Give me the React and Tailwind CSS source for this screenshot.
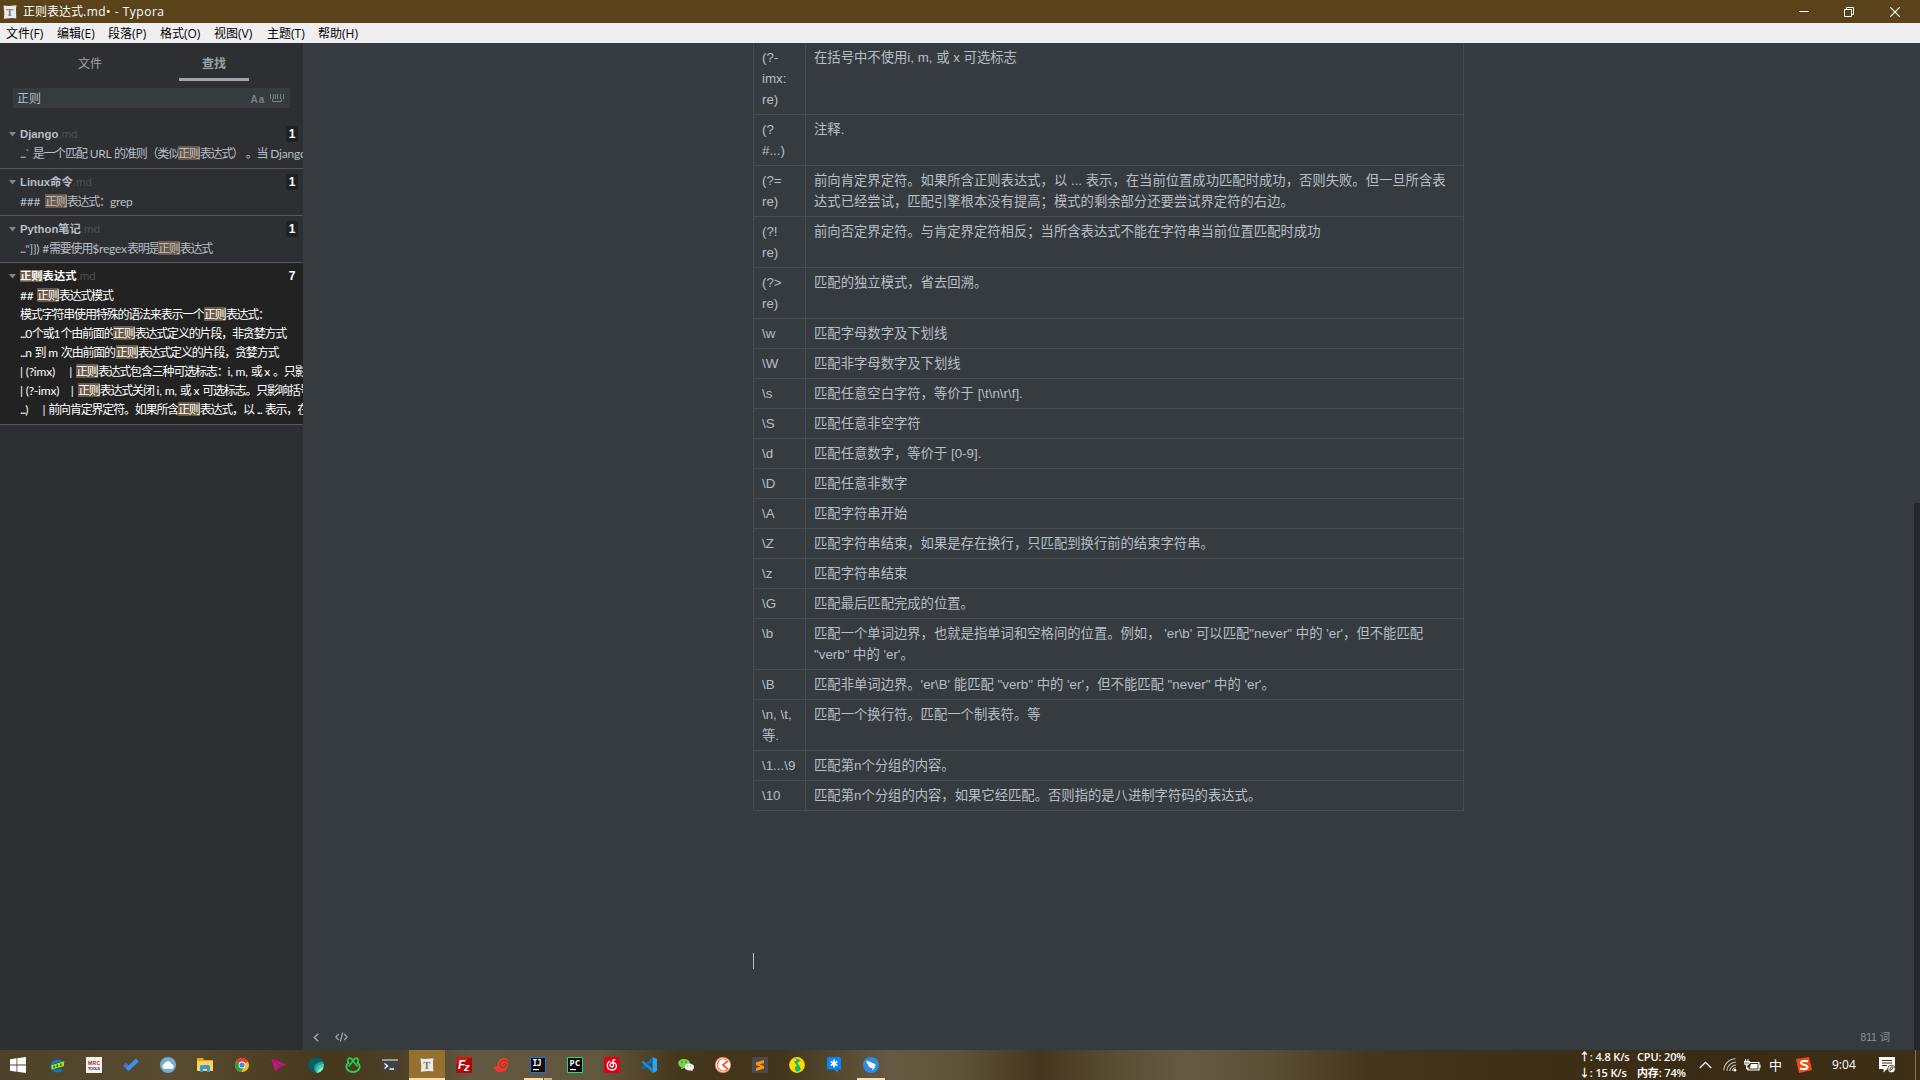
import React from 'react';

const ROWS = [
  [['(?-', 'imx:', 're)'], ['在括号中不使用i, m, 或 x 可选标志']],
  [['(?', '#...)'], ['注释.']],
  [['(?=', 're)'], ['前向肯定界定符。如果所含正则表达式，以 ... 表示，在当前位置成功匹配时成功，否则失败。但一旦所含表', '达式已经尝试，匹配引擎根本没有提高；模式的剩余部分还要尝试界定符的右边。']],
  [['(?!', 're)'], ['前向否定界定符。与肯定界定符相反；当所含表达式不能在字符串当前位置匹配时成功']],
  [['(?>', 're)'], ['匹配的独立模式，省去回溯。']],
  [['\\w'], ['匹配字母数字及下划线']],
  [['\\W'], ['匹配非字母数字及下划线']],
  [['\\s'], ['匹配任意空白字符，等价于 [\\t\\n\\r\\f].']],
  [['\\S'], ['匹配任意非空字符']],
  [['\\d'], ['匹配任意数字，等价于 [0-9].']],
  [['\\D'], ['匹配任意非数字']],
  [['\\A'], ['匹配字符串开始']],
  [['\\Z'], ['匹配字符串结束，如果是存在换行，只匹配到换行前的结束字符串。']],
  [['\\z'], ['匹配字符串结束']],
  [['\\G'], ['匹配最后匹配完成的位置。']],
  [['\\b'], ["匹配一个单词边界，也就是指单词和空格间的位置。例如， 'er\\b' 可以匹配\"never\" 中的 'er'，但不能匹配", "\"verb\" 中的 'er'。"]],
  [['\\B'], ["匹配非单词边界。'er\\B' 能匹配 \"verb\" 中的 'er'，但不能匹配 \"never\" 中的 'er'。"]],
  [['\\n, \\t,', '等.'], ['匹配一个换行符。匹配一个制表符。等']],
  [['\\1...\\9'], ['匹配第n个分组的内容。']],
  [['\\10'], ['匹配第n个分组的内容，如果它经匹配。否则指的是八进制字符码的表达式。']],
];

const MENU = [
  ['文件(F)', 'w-[51px]'],
  ['编辑(E)', 'w-[51px]'],
  ['段落(P)', 'w-[52px]'],
  ['格式(O)', 'w-[54px]'],
  ['视图(V)', 'w-[53px]'],
  ['主题(T)', 'w-[51px]'],
  ['帮助(H)', 'w-[51px]'],
];

function Mark({ children }) {
  return <span className="bg-[#6b5a45]">{children}</span>;
}

function Lines({ lines }) {
  return lines.map((l) => (
    <div key={l} className="whitespace-pre">{l}</div>
  ));
}

// Latin runs keep nearly natural spacing, dots and CJK runs are set tight.
function Mixed({ text }) {
  return text.split(/(\.{3}|[\x20-\x2d\x2f-\x7e]+)/).filter(Boolean).map((run, i) => (
    <span key={i} className={/^\.{3}/.test(run) ? 'tracking-[-1.1px]' : /^[\x20-\x7e]/.test(run) ? 'tracking-[-0.2px]' : 'tracking-[-1.18px]'}>{run}</span>
  ));
}

function Snippet({ before, w, after }) {
  return (
    <div className="flex h-[19px]">
      <span className={'shrink-0 ' + w}><Mixed text={before} /></span>
      <span className="mt-[2px] h-[14px] shrink-0 bg-[#6b5a45] leading-[15px] tracking-[-1.18px]">正则</span>
      <span className="shrink-0"><Mixed text={after} /></span>
    </div>
  );
}

function Result({ name, count, active, first, children }) {
  return (
    <section className={active ? 'border-b border-[#55575a] bg-[#222222] pt-[4px] pb-[5px] text-white' : first ? 'border-b border-[#55575a] pt-[4px] pb-[5px] text-[#b8bfc6]' : 'border-b border-[#55575a] pt-[4px] pb-[4px] text-[#b8bfc6]'}>
      <div className="flex h-[19px] items-center pr-[5px] pl-[9px]">
        <svg className="mr-[4px] h-[5px] w-[7px]" viewBox="0 0 7 5"><path d="M0 0h7L3.5 4.5z" fill="#80858a" /></svg>
        <span className="text-[11.3px] font-bold whitespace-pre">{name}</span>
        <span className="text-[11.5px] text-[#4c4f53]">.md</span>
        <span className={active ? 'mb-[2px] ml-auto flex h-[16px] w-[12px] items-center justify-center text-[12px] font-bold' : 'mb-[2px] ml-auto flex h-[16px] w-[12px] items-center justify-center rounded-[2px] bg-[#202122] text-[12px] font-bold text-white'}>{count}</span>
      </div>
      <div className="overflow-hidden pl-[20px] font-[Lato,'Noto_Sans_CJK_SC',sans-serif] text-[12px] leading-[19px] whitespace-pre">{children}</div>
    </section>
  );
}

function Ico({ children }) {
  return <svg className="h-[16px] w-[16px]" viewBox="0 0 16 16">{children}</svg>;
}

const ICONS = [
  <Ico key="ie">
    <path d="M3 9C3 3 13 2 13 7.500" fill="none" stroke="#0a78d0" strokeWidth="3" />
    <path d="M3 8c0 6.500 6 7 10 4.500" fill="none" stroke="#0a78d0" strokeWidth="3" />
    <path d="M2.300 8.300 15.300 4.300 14.800 9.300 2.500 12.600z" fill="#a4e80c" />
    <path d="M5 8.500v2.500M8.300 7.500V10M11.800 6.500V9" stroke="#27400a" strokeWidth="1.200" />
  </Ico>,
  <Ico key="mrc">
    <path d="M0 0h16v16H0z" fill="#f3f3f3" />
    <text x="8" y="8" fontSize="5" fontWeight="bold" textAnchor="middle" textLength="12" fill="#b52020">MRC</text>
    <text x="8" y="12.500" fontSize="4" fontWeight="bold" textAnchor="middle" textLength="12" fill="#333">TOOLS</text>
  </Ico>,
  <Ico key="todo">
    <path d="M0 8.500 2.800 5.700l5 5-2.900 2.900z" fill="#4a6fe0" />
    <path d="M4.900 13.600 2.900 11 13 1.600l2.800 2.900-9.500 9.100z" fill="#3f8cf7" />
  </Ico>,
  <Ico key="cloud">
    <circle cx="8" cy="8" r="8" fill="#74afd3" />
    <path d="M4.800 12a2.600 2.600 0 0 1-.6-5 3.800 3.800 0 0 1 7.200-.2A2.700 2.700 0 0 1 11.800 12z" fill="#fff" />
  </Ico>,
  <Ico key="folder">
    <path d="M0 1h6l1 2h9v11H0z" fill="#e8a516" />
    <path d="M0 4h16v10H0z" fill="#ffd65c" />
    <path d="M3 14V9l1.500-1h7L13 9v6h-3v-3H6v3H3z" fill="#3b9ad8" />
  </Ico>,
  <Ico key="chrome">
    <circle cx="8" cy="8" r="7" fill="#fbc116" />
    <path d="M8 8 2 4.400a7 7 0 0 1 12.100.1z" fill="#e33b2e" />
    <path d="M1.900 4.500A7 7 0 0 0 7.300 15l3-5.500L8 8z" fill="#2b9f48" />
    <circle cx="8" cy="8" r="3.400" fill="#fff" />
    <circle cx="8" cy="8" r="2.600" fill="#4286f4" />
  </Ico>,
  <Ico key="plane">
    <path d="M0 1 16 8l-6.500 1.400L4 14z" fill="#c3187e" />
    <path d="m7 10 1.300 4.500L10 12z" fill="#8b1160" />
    <path d="m0 1 9.500 8.400" stroke="#8b1160" strokeWidth=".7" />
  </Ico>,
  <Ico key="teal">
    <circle cx="8" cy="8" r="7.900" fill="#0d5c60" />
    <path d="M15 4.500A8 8 0 0 1 8.500 15.900C3.500 11 7 4.500 15 4.500z" fill="#1aa595" />
    <path d="M15.800 7A8 8 0 0 1 9 15.900C6.500 11 9.500 7 15.800 7z" fill="#3fcfae" />
    <path d="M15.600 10.500A8 8 0 0 1 10 15.700c-.5-2.700 2-5.200 5.600-5.200z" fill="#8ff0cd" />
  </Ico>,
  <Ico key="clover">
    <g fill="none" stroke="#28cf4e" strokeWidth="1.800">
      <path d="M8 4.500C7.500 2 5.500.6 4 1.300 2.300 2.200 2.500 5 4 6.500M8 4.500c.5-2.500 2.500-3.900 4-3.200 1.700.9 1.500 3.700 0 5.200" />
      <path d="M4 5.500C1.500 7 .8 9.500 2 12c2.300 4 9.700 4 12 0 1.200-2.500.5-5-2-6.500" />
      <path d="M8 4 3.500 9.500M8 4l4.500 5.500" strokeWidth="1.500" />
    </g>
  </Ico>,
  <Ico key="term">
    <path d="M0 2h16v12H0z" fill="#3f4347" />
    <path d="M0 2h16v2H0z" fill="#92989c" />
    <path d="m2.500 6.500 3 2.500-3 2.500M7.500 12H12" stroke="#fff" strokeWidth="1.400" fill="none" />
  </Ico>,
  <TyporaMark key="ty" />,
  <Ico key="fz">
    <path d="M0 0h16v16H0z" fill="#b50707" />
    <path d="M0 0h16L0 8z" fill="#cc1a14" />
    <text x="2" y="11.500" fontSize="12" fontStyle="italic" fontWeight="bold" fill="#fff">F</text>
    <text x="8" y="14" fontSize="11" fontStyle="italic" fontWeight="bold" fill="#fff">z</text>
  </Ico>,
  <Ico key="swirl">
    <path d="M0 9.500c2 .8 3.500.3 5-1.500C4.500 3.500 7.500 1 11 1c2.500 0 4.500 1.200 5 3l-1.800.4C16 9 13.500 15 8 15c-4 0-7-2-8-5.500z" fill="#ec3b32" />
    <path d="M14.500 4.500C11 2.500 7 4 7 7.500c0 2.500 2.500 4 4.500 3s2-4-.2-4c-1.300 0-1.800 1.500-1 2.200" fill="none" stroke="#67301f" strokeWidth=".7" />
  </Ico>,
  <Ico key="ij">
    <path d="M.5.5h15v15H.5z" fill="#0b0b0d" stroke="#1575e8" />
    <text x="2.500" y="9" fontSize="8" textLength="9" fontWeight="bold" fill="#fff" fontFamily="DejaVu Sans Mono">IJ</text>
    <path d="M3 12h6v1.200H3z" fill="#fff" />
  </Ico>,
  <Ico key="pc">
    <path d="M.5.5h15v15H.5z" fill="#0b0b0d" stroke="#22d88f" />
    <text x="2.500" y="9" fontSize="8" textLength="10.500" fontWeight="bold" fill="#fff" fontFamily="Open Sans">PC</text>
    <path d="M3 12h6v1.200H3z" fill="#fff" />
  </Ico>,
  <Ico key="netease">
    <rect width="16" height="16" rx="2.500" fill="#dd001b" />
    <path d="M6.200 4C2 6 2.500 13 8 13c5 0 6-6.500 1.500-7.300C5.500 5 5 10 7.800 10c2.700 0 1.500-3 1-5.500C8.500 2.700 10 2.200 11.300 3.200" fill="none" stroke="#fff" strokeWidth="1.300" />
  </Ico>,
  <Ico key="code">
    <path d="M11.500 0 16 2v12l-4.500 2z" fill="#2aa5ef" />
    <path d="M11.500 0v5L2 12.300.3 11l11.200-11z" fill="#0b6fb8" />
    <path d="M11.500 16v-5L2 3.700.3 5z" fill="#168bd6" />
  </Ico>,
  <Ico key="wechat">
    <path d="M6 2c8 0 8 9 0 9l-3 1.300.3-2C-2 7.500 0 2 6 2z" fill="#7bd34b" />
    <path d="M11 6.500c6 0 6 5 3.500 6.500l.2 1.300-1.700-.8C5 14.500 5 6.500 11 6.500z" fill="#f1f1f1" />
    <circle cx="4" cy="5" r=".8" fill="#315d20" /><circle cx="8" cy="5" r=".8" fill="#315d20" />
    <circle cx="9.500" cy="9" r=".6" fill="#888" /><circle cx="12.700" cy="9" r=".6" fill="#888" />
  </Ico>,
  <Ico key="k">
    <circle cx="8" cy="8" r="8" fill="#f58a64" />
    <circle cx="8" cy="8" r="7.200" fill="#fff" />
    <path d="M11.500 2.800A6 6 0 1 0 12 12.700" fill="none" stroke="#f0683c" strokeWidth="1.200" />
    <path d="M13 3.800 8 8l5 4.200" fill="none" stroke="#ef5e31" strokeWidth="1.900" />
  </Ico>,
  <Ico key="sublime">
    <rect width="16" height="16" rx="1" fill="#4a4a4b" />
    <path d="M12 3v3L7.500 7.500 12 9v2.500L4 14v-3l4.500-1.500L4 8V5.500z" fill="#ff9800" />
  </Ico>,
  <Ico key="qq">
    <circle cx="8" cy="8" r="7.900" fill="#ffdc00" />
    <path d="M5 1 12 3 8.500 6 11 10a2.800 2.800 0 1 1-3-1L5 4.500 8 3.500z" fill="#19b36b" />
  </Ico>,
  <Ico key="star">
    <path d="M2.500 0h11A1.500 1.500 0 0 1 15 1.500v11h-3V16l-4-3.500H2.500A1.500 1.500 0 0 1 1 11V1.500z" fill="#0a85f5" />
    <path d="M8 2.500v8M4.700 4.500l6.600 4M11.300 4.500l-6.600 4" stroke="#fff" strokeWidth="1.700" />
  </Ico>,
  <Ico key="ding">
    <circle cx="8" cy="8" r="8" fill="#2e8be6" />
    <path d="M3.500 3.500 12 7c1 .5.5 1.500-.5 3h1L9 13.500 9.500 11H8L4.500 8.500l1.500-.3C4 7 3.500 6 3.500 3.500z" fill="#fff" />
  </Ico>,
];

function TyporaMark() {
  return (
    <Ico>
      <path d="m1.500 1.500 5 .5 8-.8-.5 4 .3 9.300-4-.5-8.500.8.500-5z" fill="#e9e9e9" />
      <text x="7.800" y="11.800" fontSize="10.500" textAnchor="middle" fontWeight="bold" fill="#777" fontFamily="Liberation Serif">T</text>
    </Ico>
  );
}

function Tray() {
  return (
    <div className="ml-auto flex h-full items-center text-white">
      <div className="grid w-[120px] grid-cols-[58px_62px] font-['Open_Sans','Noto_Sans_CJK_SC',sans-serif] text-[11px] leading-[16px] font-semibold tracking-[-0.15px] whitespace-pre">
        <span>↑: 4.8 K/s</span><span>CPU: 20%</span>
        <span>↓: 15 K/s</span><span>内存: 74%</span>
      </div>
      <svg className="h-[8px] w-[13px]" viewBox="0 0 13 8"><path d="m.8 7 5.700-5.700L12.200 7" fill="none" stroke="#fff" strokeWidth="1.300" /></svg>
      <svg className="ml-[11px] h-[14px] w-[14px]" viewBox="0 0 14 14">
        <g fill="none" stroke="#c9c4ba" strokeWidth="1.100"><path d="M.8 12.500A12 12 0 0 1 12.500.8M3.800 13A9.500 9.500 0 0 1 13 4M6.800 13A6.500 6.500 0 0 1 13 7M9.600 13A3.500 3.500 0 0 1 13 9.800" /></g>
        <circle cx="12" cy="12.300" r="1.300" fill="#fff" />
      </svg>
      <svg className="ml-[7px] h-[13px] w-[17px]" viewBox="0 0 17 13">
        <path d="M6 3.500h9v7.500H4V8.500" fill="none" stroke="#fff" strokeWidth="1.200" />
        <path d="M7 5h6.500v4.500H5.500zM15.500 5.500h1v3.500h-1z" fill="#fff" />
        <path d="M1.500 0v2.500M4 0v2.500M0 2.500h5.500v2L4 6H1.500L0 4.500zM2.700 6v4H4" stroke="#fff" fill="#fff" fillOpacity=".6" />
      </svg>
      <span className="ml-[8px] w-[13px] font-['Noto_Sans_CJK_SC',sans-serif] text-[13px] leading-[16px]">中</span>
      <svg className="ml-[14px] h-[16px] w-[16px]" viewBox="0 0 16 16">
        <path d="m0 2 13-2 3 13-13 3z" fill="#f24a13" />
        <path d="M12 4.300C9 3.500 5 3.800 5 6s6.500 1.500 6.500 4-4.500 2.500-7.500 1.500" fill="none" stroke="#fff" strokeWidth="2" />
      </svg>
      <span className="ml-[20px] w-[47px] font-['Open_Sans',sans-serif] text-[12px] tracking-[0px]">9:04</span>
      <svg className="h-[16px] w-[17px]" viewBox="0 0 17 16">
        <path d="M0 0h16v12H8l-3.500 3.500V12H0z" fill="#fff" />
        <path d="M3 3.500h10M3 6h10M3 8.500h5" stroke="#3a2c16" strokeWidth="1.200" />
        <circle cx="12.500" cy="12" r="3.800" fill="#fff" stroke="#3a2c16" strokeWidth=".8" />
        <path d="M11 13.500c-1-2.500 2-5 3.500-2.500M11 13.500l3-2" stroke="#3a2c16" fill="none" />
      </svg>
      <div className="ml-[19px] h-full w-[1px] bg-[#7d735f]" />
      <div className="w-[4px]" />
    </div>
  );
}

export default function App() {
  return (
    <div className="flex h-[1080px] w-[1920px] flex-col overflow-hidden bg-[#363b40] font-['Liberation_Sans','Noto_Sans_CJK_SC',sans-serif]">
      <header className="flex h-[23px] shrink-0 items-center bg-[#5a431b] pl-[2px] text-white">
        <TyporaMark />
        <span className="ml-[5px] font-['Open_Sans','Noto_Sans_CJK_SC',sans-serif] text-[12px] whitespace-pre">正则表达式<span className="tracking-[0.5px]">.md• - Typora</span></span>
        <div className="ml-auto flex items-center">
          <svg className="mr-[35px] h-[11px] w-[10px]" viewBox="0 0 10 11"><path d="M0 5.500h10" stroke="#fff" /></svg>
          <svg className="mr-[36px] h-[10px] w-[10px]" viewBox="0 0 10 10"><path d="M.5 2.500h7v7h-7zM2.500 2.500v-2h7v7h-2" fill="none" stroke="#fff" /></svg>
          <svg className="mr-[20px] h-[10px] w-[10px]" viewBox="0 0 10 10"><path d="m0 0 10 10M10 0 0 10" stroke="#fff" strokeWidth="1.200" /></svg>
        </div>
      </header>
      <nav className="flex h-[20px] shrink-0 items-center bg-[#efefef] pt-[2px] pl-[6px] font-['Open_Sans','Noto_Sans_CJK_SC',sans-serif] text-[12px] leading-[18px] text-black">
        {MENU.map(([t, w]) => <span key={t} className={w}>{t}</span>)}
      </nav>

      <div className="flex h-[1007px] shrink-0">
        <aside className="flex w-[303px] shrink-0 flex-col overflow-hidden bg-[#2e2f33]">
          <div className="flex h-[38px] justify-center gap-[54px] pl-[1px] text-[12px] text-[#9da3a9]">
            <div className="flex h-full w-[70px] items-center justify-center pt-[4px]">文件</div>
            <div className="flex h-full w-[70px] items-center justify-center border-b-[3px] border-[#a1a7ad] pt-[7px] font-bold">查找</div>
          </div>
          <div className="mt-[7px] mr-[13px] ml-[13px] flex h-[20px] shrink-0 items-center bg-[#363b40] pr-[6px] pl-[4px] text-[12px] text-[#b8bfc6]">
            <span className="pt-[2px]">正则</span>
            <span className="ml-auto pt-[2px] text-[10px] font-bold tracking-[0.8px] text-[#7b8085]">Aa</span>
            <svg className="ml-[5px] h-[9px] w-[14px]" viewBox="0 0 14 9"><path d="M.5 0v5M13.500 0v5M3.500 0v5M5.500 0v5M7.500 0v5M10.500 0v5M2.500 5v2.500h9V5" fill="none" stroke="#7b8085" /></svg>
          </div>
          <div className="mt-[13px]">
            <Result name="Django" count="1" first>
              <Snippet w="w-[158px]" before="...` 是一个匹配 URL 的准则（类似" after="表达式） 。当 Django" />
            </Result>
            <Result name="Linux命令" count="1">
              <Snippet w="w-[25px]" before="### " after="表达式：grep" />
            </Result>
            <Result name="Python笔记" count="1">
              <Snippet w="w-[138px]" before={'..."]}) #需要使用$regex表明是'} after="表达式" />
            </Result>
            <Result name={<><Mark>正则</Mark>表达式</>} count="7" active>
              <Snippet w="w-[17px]" before="## " after="表达式模式" />
              <Snippet w="w-[184px]" before="模式字符串使用特殊的语法来表示一个" after="表达式：" />
              <Snippet w="w-[93px]" before="...0个或1个由前面的" after="表达式定义的片段，非贪婪方式" />
              <Snippet w="w-[96px]" before="...n 到 m 次由前面的" after="表达式定义的片段，贪婪方式" />
              <Snippet w="w-[56px]" before="| (?imx)     | " after="表达式包含三种可选标志：i, m, 或 x 。只影响" />
              <Snippet w="w-[58px]" before="| (?-imx)    | " after="表达式关闭 i, m, 或 x 可选标志。只影响括号" />
              <Snippet w="w-[158px]" before="...)     | 前向肯定界定符。如果所含" after="表达式，以 ... 表示，在" />
            </Result>
          </div>
        </aside>

        <main className="flex flex-1 flex-col">
          <div className="ml-[450px] w-[711px] border-x border-[#474b54] text-[13.333px] leading-[21px] text-[#b8bfc6]">
            {ROWS.map(([a, b]) => (
              <div key={a.join('')} className="flex border-b border-[#474b54]">
                <div className="w-[52px] shrink-0 border-r border-[#474b54] py-[4px] pl-[8px]"><Lines lines={a} /></div>
                <div className="flex-1 py-[4px] pl-[8px]"><Lines lines={b} /></div>
              </div>
            ))}
          </div>
          <div className="mt-[142px] ml-[450px] h-[16px] w-[1px] bg-[#b8bfc6]" />
          <footer className="mt-auto flex h-[26px] items-center pr-[24px] pl-[10px] text-[#8f9498]">
            <svg className="h-[9px] w-[6px]" viewBox="0 0 6 9"><path d="M5.300.7 1.300 4.500l4 3.800" fill="none" stroke="#a0a5a9" strokeWidth="1.500" /></svg>
            <svg className="ml-[16px] h-[10px] w-[13px]" viewBox="0 0 13 10"><path d="M3.800 2 .8 5l3 3M9.200 2l3 3-3 3M7.700.5 5.300 9.500" fill="none" stroke="#a0a5a9" strokeWidth="1.200" /></svg>
            <span className="ml-auto pt-[2px] text-[10.300px]">811 词</span>
          </footer>
        </main>
        <div className="flex w-[6px] flex-col justify-end"><div className="h-[547px] bg-[#24272b]" /></div>
      </div>

      <footer className="flex h-[30px] shrink-0 items-center bg-[linear-gradient(90deg,#4d4229_0px,#584b30_180px,#45371b_330px,#4d4026_400px,#625740_470px,#62563b_600px,#44361a_680px,#41341a_780px,#665a42_890px,#5e5239_960px,#45371f_1040px,#5a4e35_1120px,#665a44_1190px,#5a4e35_1270px,#43361c_1370px,#3e3017_1540px,#392b13_1700px,#3e3017_1920px)]">
        <div className="flex w-[39px] justify-center pr-[3px]">
          <svg className="h-[16px] w-[16px]" viewBox="0 0 16 16"><path d="M0 2.300 6.500 1.300V7.500H0zM7.300 1.200 16 0v7.500H7.300zM0 8.400h6.500v6.300L0 13.700zM7.300 8.400H16V16l-8.700-1.200z" fill="#fff" /></svg>
        </div>
        {ICONS.map((icon, i) => (
          <div key={i} className="mr-[1px] flex h-full w-[36px] flex-col">
            <div className={i === 10 ? 'flex h-[28px] items-center justify-center bg-[#96702f] pt-[2px]' : 'flex h-[28px] items-center justify-center pt-[2px]'}>{icon}</div>
            {i === 10 && <div className="h-[2px] bg-[#ffdcab]" />}
            {i === 13 && <div className="flex h-[2px] gap-[1px] pl-[4px]"><div className="w-[19px] bg-[#ffdcab]" /><div className="w-[8px] bg-[#c9b48c]" /></div>}
            {i === 22 && <div className="mx-[4px] h-[2px] bg-[#ffdcab]" />}
          </div>
        ))}
        <Tray />
      </footer>
    </div>
  );
}
